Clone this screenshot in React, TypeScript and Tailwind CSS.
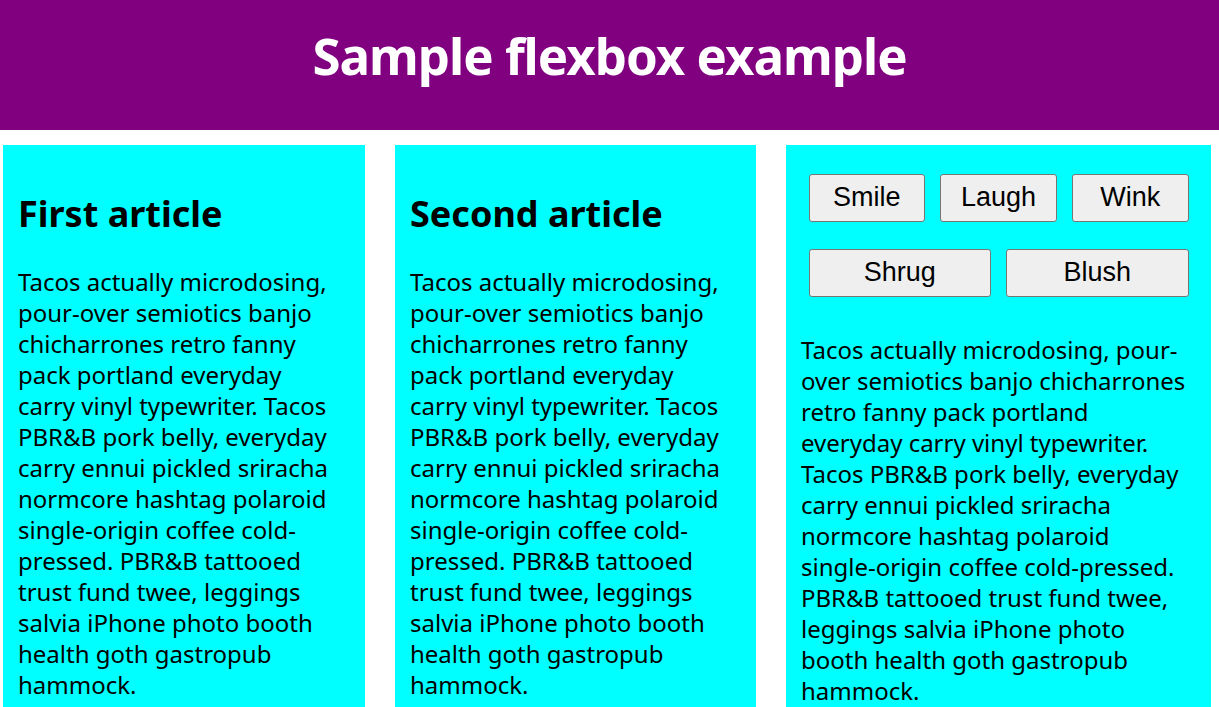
import React from 'react'

const narrow: string[] = [
  'Tacos actually microdosing,',
  'pour-over semiotics banjo',
  'chicharrones retro fanny',
  'pack portland everyday',
  'carry vinyl typewriter. Tacos',
  'PBR&B pork belly, everyday',
  'carry ennui pickled sriracha',
  'normcore hashtag polaroid',
  'single-origin coffee cold-',
  'pressed. PBR&B tattooed',
  'trust fund twee, leggings',
  'salvia iPhone photo booth',
  'health goth gastropub',
  'hammock.',
]

const wide: string[] = [
  'Tacos actually microdosing, pour-',
  'over semiotics banjo chicharrones',
  'retro fanny pack portland',
  'everyday carry vinyl typewriter.',
  'Tacos PBR&B pork belly, everyday',
  'carry ennui pickled sriracha',
  'normcore hashtag polaroid',
  'single-origin coffee cold-pressed.',
  'PBR&B tattooed trust fund twee,',
  'leggings salvia iPhone photo',
  'booth health goth gastropub',
  'hammock.',
]

const Copy = ({ lines, className }: { lines: string[]; className?: string }) => (
  <p className={`text-[24px] leading-[31px] text-black ${className ?? ''}`}>
    {lines.map((l, i) => (
      <span key={i} className="block whitespace-nowrap">
        {l}
      </span>
    ))}
  </p>
)

const Article = ({ title, width }: { title: string; width: string }) => (
  <article className={`${width} shrink-0 bg-[#00ffff] p-[15px]`}>
    <h2 className="mt-[30px] text-[36px] leading-[48px] font-bold text-black">{title}</h2>
    <Copy lines={narrow} className="mt-[28px]" />
  </article>
)

const Btn = ({ label }: { label: string }) => (
  <button
    type="button"
    className="flex-1 m-[7.5px] h-[48px] flex items-center justify-center rounded-[3px] border border-[#767676] bg-[#efefef] text-[27px] text-black"
    style={{ fontFamily: '"Liberation Sans", Arial, sans-serif' }}
  >
    {label}
  </button>
)

export default function App() {
  return (
    <div className="min-h-screen bg-white" style={{ fontFamily: '"Noto Sans", "Open Sans", sans-serif' }}>
      {/* Header */}
      <header className="h-[130px] bg-[#800080] flex justify-center">
        <h1 className="mt-[30px] text-[51px] leading-[51px] tracking-[-1px] font-bold text-white">
          Sample flexbox example
        </h1>
      </header>

      <section className="flex gap-[30px] pt-[15px] pl-[3px] pr-[8px]">
        <Article title="First article" width="w-[362px]" />
        <Article title="Second article" width="w-[361px]" />

        <article className="flex-1 bg-[#00ffff] p-[15px] flex flex-col">
          <div className="h-[150px] flex flex-col justify-around">
            <div className="flex">
              <Btn label="Smile" />
              <Btn label="Laugh" />
              <Btn label="Wink" />
            </div>
            <div className="flex">
              <Btn label="Shrug" />
              <Btn label="Blush" />
            </div>
          </div>
          <Copy lines={wide} className="mt-[24px]" />
        </article>
      </section>
    </div>
  )
}
